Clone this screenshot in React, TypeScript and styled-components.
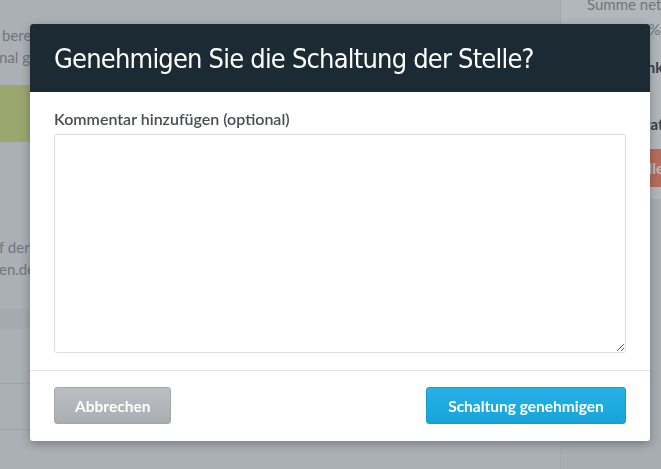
import styled, { createGlobalStyle } from "styled-components";

const GlobalStyle = createGlobalStyle`
    html, body {
        margin: 0;
        padding: 0;
        height: 100%;
        overflow: hidden;
    }
    body {
        font-family: Lato, "Liberation Sans", sans-serif;
        background: #ececef;
    }
`;

const App = () => {
    return (
        <>
            <GlobalStyle />
            <StyledPage>
                <StyledMain>
                    <div className="intro">
                        <p>bereit</p>
                        <p className="shift">nal ge</p>
                    </div>
                    <div className="status-band" />
                    <div className="source">
                        <p className="shift">f der</p>
                        <p className="shift">en.de</p>
                    </div>
                    <div className="section-band" />
                    <div className="table-row tall" />
                    <div className="table-row" />
                </StyledMain>
                <StyledSidebar>
                    <div className="sidebar-top">
                        <p className="muted top">Summe netto</p>
                        <p className="muted tax">19%</p>
                        <p className="strong total">Dank</p>
                        <p className="strong status">Status</p>
                        <div className="danger">Stelle ablehnen</div>
                    </div>
                </StyledSidebar>
            </StyledPage>
            <StyledOverlay />
            <StyledModal>
                <div className="modal-header">
                    <h2>Genehmigen Sie die Schaltung der Stelle?</h2>
                </div>
                <div className="modal-body">
                    <label htmlFor="comment">Kommentar hinzufügen (optional)</label>
                    <textarea id="comment" />
                </div>
                <div className="modal-footer">
                    <ModalButton variant="cancel">Abbrechen</ModalButton>
                    <ModalButton variant="primary">Schaltung genehmigen</ModalButton>
                </div>
            </StyledModal>
        </>
    );
};

export default App;

const StyledPage = styled.div`
    display: flex;
    height: 469px;
    background: #ececef;
`;

const StyledMain = styled.div`
    flex: 1;
    display: flex;
    flex-direction: column;
    overflow: hidden;

    p {
        margin: 0 0 0 2px;
        font-size: 15px;
        line-height: 22px;
        color: #9a9a9c;
        white-space: nowrap;
    }

    .shift {
        margin-left: -1px;
    }

    .intro {
        padding-top: 24px;
        height: 85px;
        box-sizing: border-box;
    }

    .status-band {
        height: 57px;
        background: #d5de89;
    }

    .source {
        padding-top: 94px;
        height: 167px;
        box-sizing: border-box;
    }

    .section-band {
        height: 20px;
        background: #e3e4e6;
    }

    .table-row {
        height: 45px;
        border-bottom: 1px solid #d9dadc;
    }

    .tall {
        height: 54px;
    }
`;

const StyledSidebar = styled.div`
    width: 100px;
    background: #e7e8ea;
    border-left: 1px solid #e2e3e5;
    overflow: hidden;

    p {
        margin: 0;
        font-size: 15px;
        line-height: 20px;
        white-space: nowrap;
    }

    .sidebar-top {
        background: #f7f7f8;
        height: 205px;
        padding-left: 26px;
        box-sizing: border-box;
    }

    .top {
        margin-top: -6px;
    }

    .muted {
        color: #9a9a9c;
    }

    .tax {
        margin: 5px 0 0 44px;
    }

    .strong {
        color: #4c4f52;
        font-weight: 700;
    }

    .total {
        margin: 18px 0 0 41px;
    }

    .status {
        margin: 37px 0 0 50px;
    }

    .danger {
        margin: 15px 0 0 40px;
        height: 38px;
        line-height: 38px;
        background: #fb8c70;
        color: #fff;
        font-weight: 700;
        font-size: 15px;
        white-space: nowrap;
    }
`;

const StyledOverlay = styled.div`
    position: fixed;
    inset: 0;
    background: rgba(20, 35, 50, 0.3);
`;

const StyledModal = styled.div`
    position: absolute;
    left: 30px;
    top: 24px;
    width: 620px;
    background: #fff;
    border-radius: 3px;
    box-shadow: 0 3px 10px rgba(0, 0, 0, 0.3);
    overflow: hidden;

    .modal-header {
        height: 68px;
        background: #1b2a33;
        display: flex;
        align-items: center;
        padding: 0 24px;

        h2 {
            margin: 0;
            font-family: "DejaVu Sans Condensed", "DejaVu Sans", sans-serif;
            font-stretch: condensed;
            font-weight: 400;
            font-size: 27px;
            letter-spacing: -0.8px;
            color: #fff;
            white-space: nowrap;
        }
    }

    .modal-body {
        padding: 17px 24px 17px;
        display: flex;
        flex-direction: column;

        label {
            font-size: 16px;
            font-weight: 600;
            color: #4a4d50;
            line-height: 20px;
            margin-bottom: 5px;
        }

        textarea {
            height: 219px;
            box-sizing: border-box;
            border: 1px solid #dcdde0;
            border-radius: 3px;
            font-family: Lato, sans-serif;
            font-size: 14px;
            outline: none;
        }
    }

    .modal-footer {
        border-top: 1px solid #e2e3e6;
        padding: 16px 24px 17px;
        display: flex;
        justify-content: space-between;
    }
`;

const ModalButton = styled.button<{ variant: "cancel" | "primary" }>`
    height: 37px;
    padding: 0 20px;
    border-radius: 3px;
    font-family: Lato, "Liberation Sans", sans-serif;
    font-size: 15.5px;
    font-weight: 700;
    color: #fff;
    cursor: pointer;
    min-width: ${(p) => (p.variant === "cancel" ? "116px" : "200px")};
    border: 1px solid ${(p) => (p.variant === "cancel" ? "#a3a8ad" : "#1a99d0")};
    background: ${(p) =>
        p.variant === "cancel"
            ? "linear-gradient(#bbbfc4, #a9aeb3)"
            : "linear-gradient(#25b2e8, #19a3db)"};
`;
